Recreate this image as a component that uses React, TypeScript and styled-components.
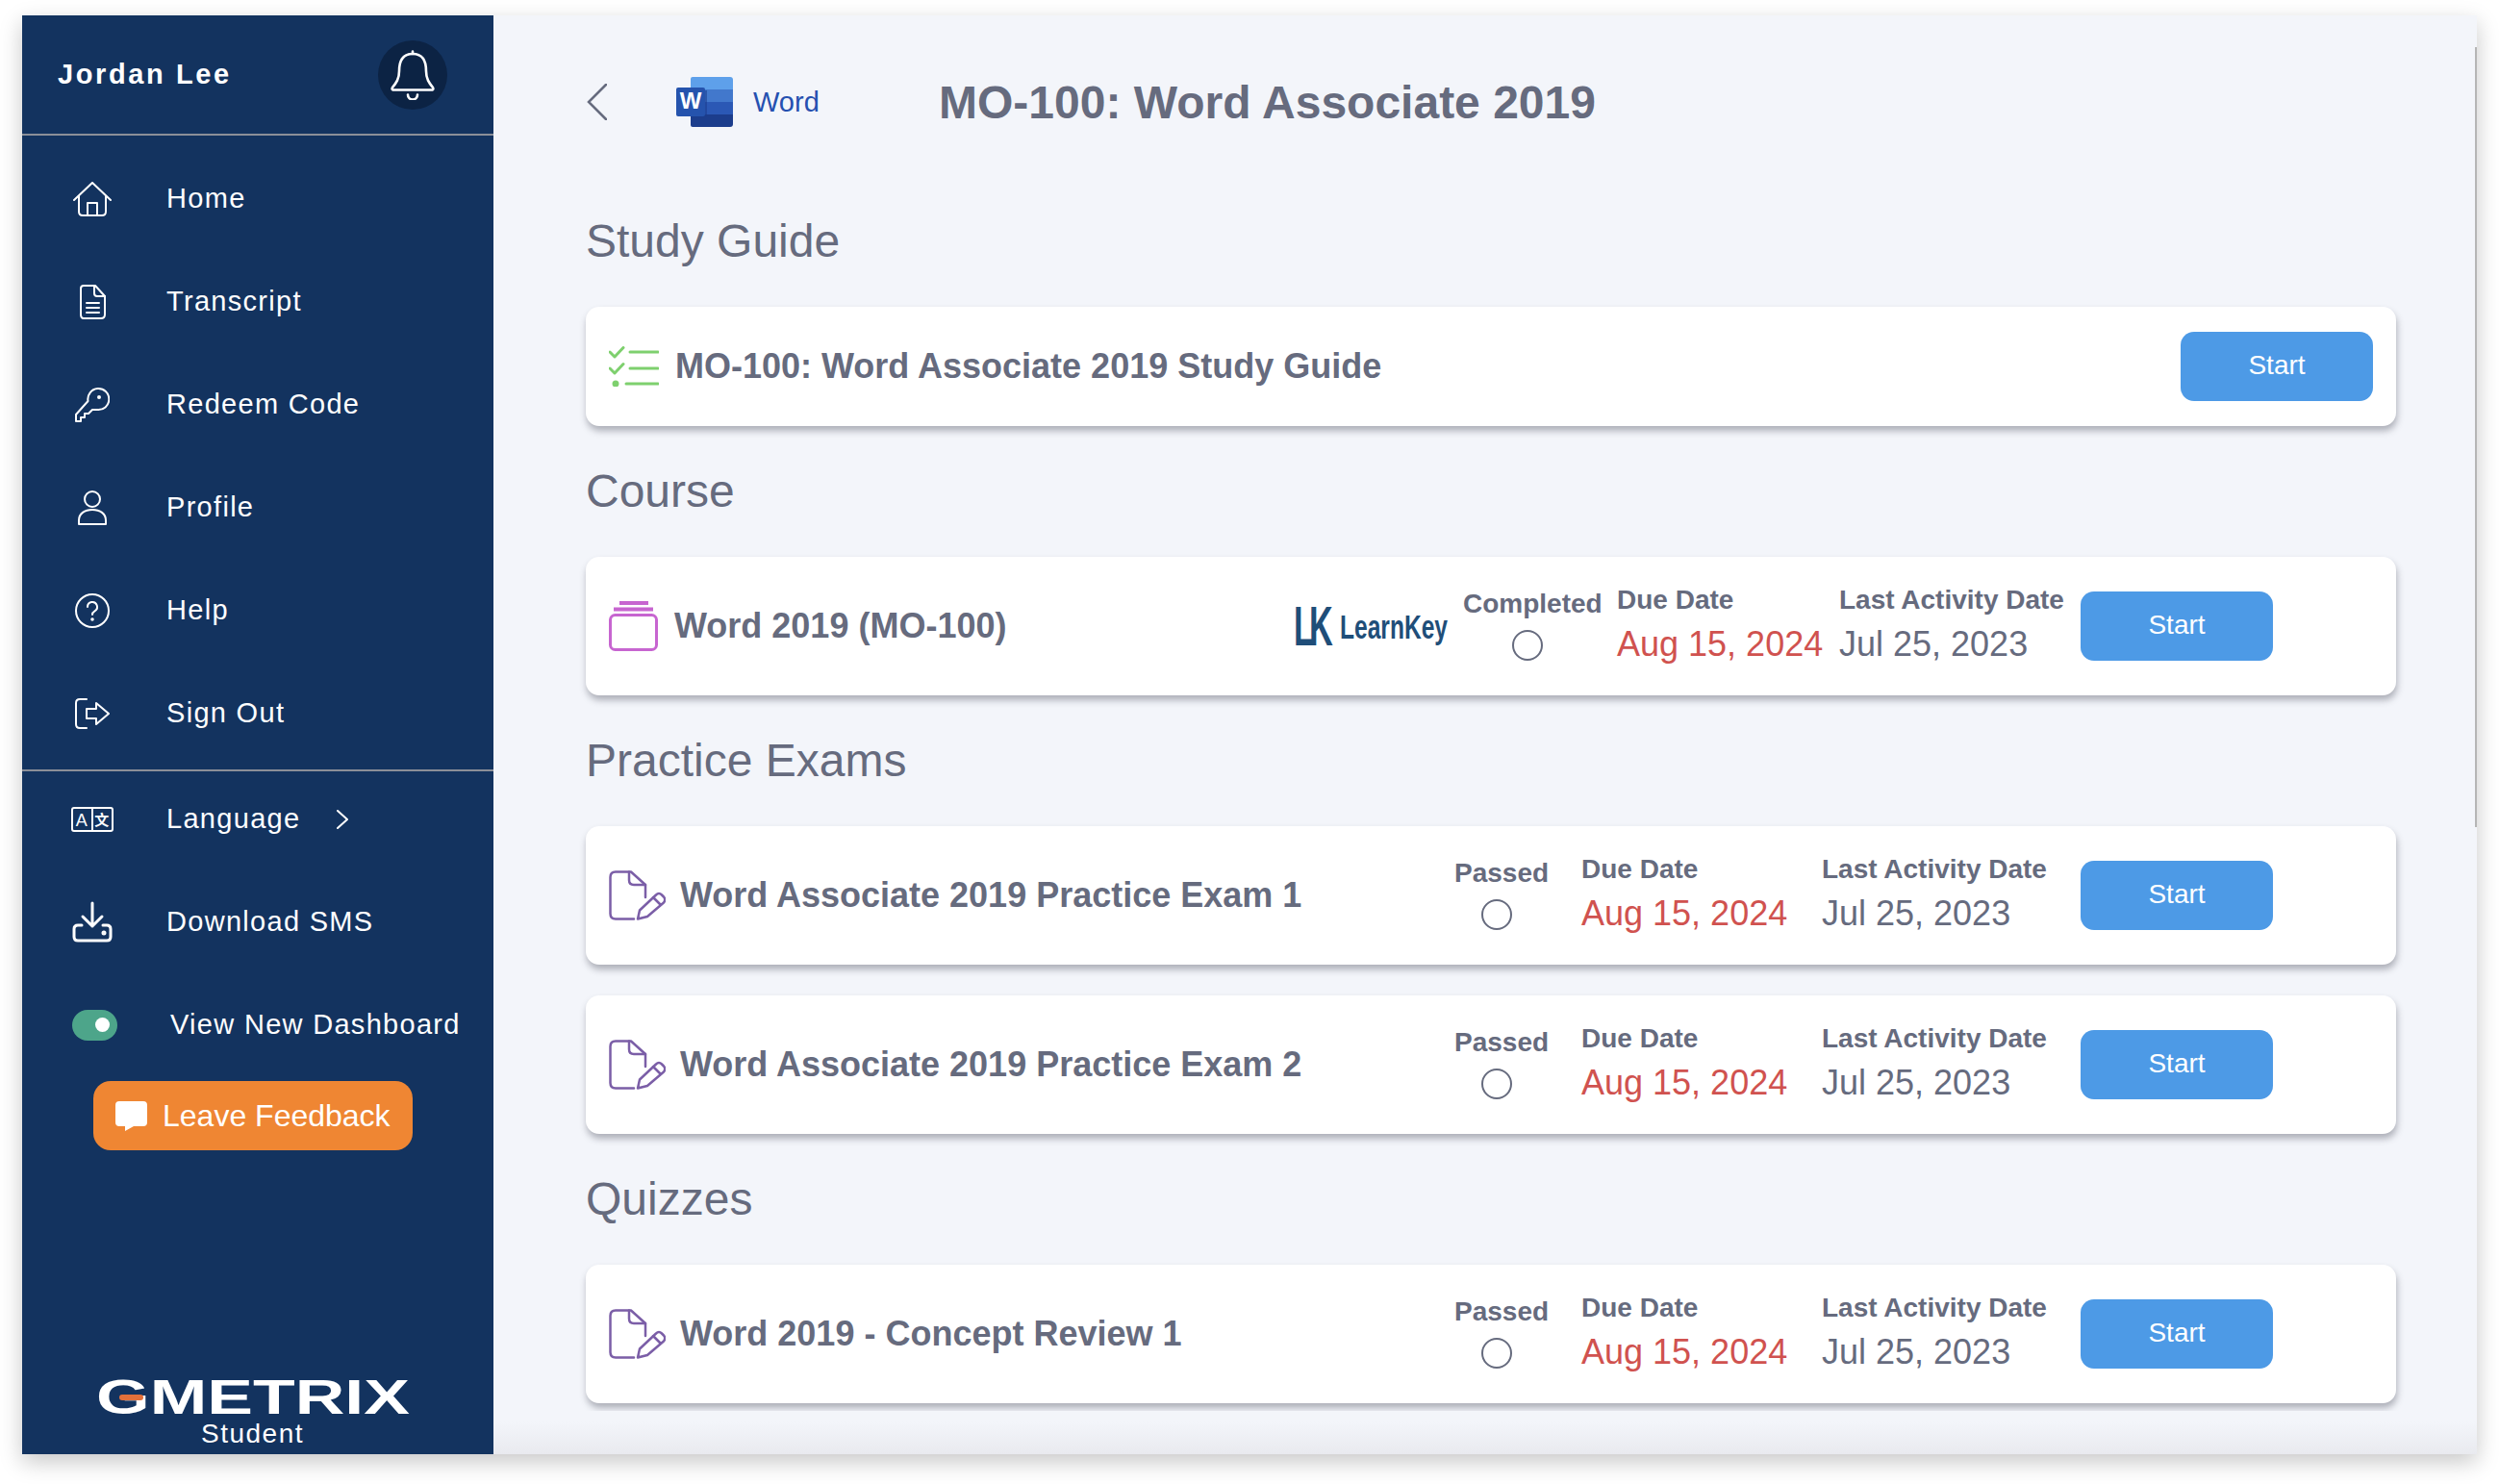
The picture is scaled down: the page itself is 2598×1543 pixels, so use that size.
import styled, { createGlobalStyle } from "styled-components";

const GlobalStyle = createGlobalStyle`
  html, body {
    margin: 0;
    background: #ffffff;
    font-family: "Liberation Sans", Arial, sans-serif;
  }
  * {
    box-sizing: border-box;
  }
`;

const Window = styled.div`
  display: flex;
  width: 2552px;
  height: 1496px;
  margin: 16px 23px 31px;
  background: #f3f5fa;
  box-shadow: 0 8px 22px rgba(0, 0, 0, 0.22);
`;

const Sidebar = styled.aside`
  width: 490px;
  flex-shrink: 0;
  display: flex;
  flex-direction: column;
  background: #13335f;
  color: #ffffff;
`;

const UserBar = styled.div`
  height: 125px;
  display: flex;
  align-items: center;
  justify-content: space-between;
  padding: 0 48px 0 37px;
  border-bottom: 2px solid #8b8f98;
`;

const UserName = styled.div`
  font-size: 29px;
  font-weight: 700;
  letter-spacing: 2.6px;
`;

const BellCircle = styled.div`
  width: 72px;
  height: 72px;
  border-radius: 50%;
  background: #0c2344;
  display: flex;
  align-items: center;
  justify-content: center;
`;

const PrimaryNav = styled.nav`
  padding: 12px 0 5px;
  border-bottom: 2px solid #8b8f98;
`;

const SecondaryNav = styled.nav`
  margin-top: -4px;
`;

const NavItem = styled.div`
  height: 107px;
  display: flex;
  align-items: center;
  padding-left: 50px;
  font-size: 29px;
  letter-spacing: 1.3px;
`;

const NavIcon = styled.span`
  width: 46px;
  margin-right: 54px;
  display: flex;
  justify-content: center;
  flex-shrink: 0;
`;

const Chevron = styled.svg`
  margin-left: 38px;
`;

const ToggleTrack = styled.span`
  width: 47px;
  height: 32px;
  margin: 0 55px 0 2px;
  border-radius: 16px;
  background: #4da58a;
  display: flex;
  align-items: center;
  justify-content: flex-end;
  padding-right: 8px;
  flex-shrink: 0;
`;

const ToggleKnob = styled.span`
  width: 15px;
  height: 15px;
  border-radius: 50%;
  background: #ffffff;
`;

const FeedbackButton = styled.button`
  width: 332px;
  height: 72px;
  margin: 5px 0 0 74px;
  border: none;
  border-radius: 18px;
  background: #ef8633;
  color: #ffffff;
  font: 400 32px "Liberation Sans", Arial, sans-serif;
  display: flex;
  align-items: center;
  gap: 16px;
  padding: 0 0 0 23px;
`;

const SideFooter = styled.div`
  margin-top: auto;
  display: flex;
  flex-direction: column;
  align-items: center;
  padding: 0 11px 4px 0;
`;

const LogoSvg = styled.svg`
  overflow: visible;
`;

const StudentLabel = styled.div`
  font-size: 28px;
  letter-spacing: 1.5px;
  line-height: 34px;
  margin-top: 3px;
`;

const Main = styled.main`
  position: relative;
  flex: 1;
  display: flex;
  flex-direction: column;
  min-width: 0;
`;

const ScrollEdge = styled.div`
  position: absolute;
  top: 33px;
  right: 0;
  width: 2px;
  height: 811px;
  background: #b5b5b5;
`;

const Content = styled.div`
  flex: 1;
  overflow: hidden;
  padding: 56px 84px 0 96px;
  color: #666b7e;
`;

const BottomFade = styled.div`
  height: 45px;
  flex-shrink: 0;
  background: linear-gradient(#f3f5fa 25%, #e9eaef);
`;

const PageHeader = styled.header`
  height: 68px;
  display: flex;
  align-items: center;
  margin-bottom: 80px;
`;

const BackIcon = styled.svg`
  margin-left: 1px;
  margin-right: 72px;
`;

const AppLabel = styled.span`
  margin-left: 21px;
  width: 193px;
  font-size: 29px;
  color: #2550b0;
`;

const PageTitle = styled.h1`
  margin: 0;
  font-size: 48px;
  font-weight: 700;
`;

const SectionTitle = styled.h2`
  margin: 37px 0 39px;
  height: 60px;
  line-height: 62px;
  font-size: 48px;
  font-weight: 400;
`;

const Card = styled.div<{ $compact?: boolean }>`
  height: ${(p) => (p.$compact ? "124px" : "144px")};
  display: flex;
  align-items: center;
  padding: 0 ${(p) => (p.$compact ? "24px" : "128px")} 0 24px;
  margin-bottom: 32px;
  border-radius: 14px;
  background: #ffffff;
  box-shadow: 1px 5px 7px rgba(60, 62, 80, 0.38);
  &:last-child {
    margin-bottom: 0;
  }
`;

const CardIcon = styled.span<{ $width: number }>`
  width: ${(p) => p.$width}px;
  flex-shrink: 0;
  display: flex;
`;

const CardTitle = styled.div`
  flex: 1;
  font-size: 36px;
  font-weight: 700;
  padding-bottom: 1px;
`;

const VendorLogo = styled.svg`
  margin-right: 16px;
  flex-shrink: 0;
  overflow: visible;
`;

const MetaColumn = styled.div<{ $width: number; $shift?: number }>`
  width: ${(p) => p.$width}px;
  flex-shrink: 0;
  display: flex;
  flex-direction: column;
  padding: 1px 0 6px ${(p) => p.$shift ?? 0}px;
`;

const MetaLabel = styled.div<{ $lower?: boolean }>`
  font-size: 28px;
  font-weight: 700;
  line-height: 32px;
  margin: ${(p) => (p.$lower ? "1px 0 8px" : "0 0 10px")};
`;

const DueValue = styled.div`
  font-size: 36px;
  line-height: 40px;
  color: #d0524f;
`;

const ActivityValue = styled.div`
  font-size: 36px;
  line-height: 40px;
`;

const StatusRadio = styled.span<{ $offset: number }>`
  width: 32px;
  height: 32px;
  margin: 3px 0 0 ${(p) => p.$offset}px;
  border: 2px solid #666b7e;
  border-radius: 50%;
`;

const StartButton = styled.button`
  width: 200px;
  height: 72px;
  flex-shrink: 0;
  border: none;
  border-radius: 14px;
  background: #4d9ae6;
  color: #ffffff;
  font: 400 28px "Liberation Sans", Arial, sans-serif;
  padding: 0 0 2px;
`;

const stroke = {
  fill: "none",
  stroke: "#ffffff",
  strokeWidth: 2,
  strokeLinecap: "round" as const,
  strokeLinejoin: "round" as const,
};

const BellIcon = () => (
  <svg width="46" height="52" viewBox="0 0 46 52" {...stroke} strokeWidth={2.6}>
    <path d="M23 4C12 4 9 12 9 22c0 8-3 12-7 17-1 2 0 2.500 2 2.500h38c2 0 3-.5 2-2.500-4-5-7-9-7-17C37 12 34 4 23 4Z" />
    <path d="M23 4V1.500M18 46.500a5 5 0 0 0 10 0" />
  </svg>
);

const HomeIcon = () => (
  <svg width="40" height="36" viewBox="0 0 40 36" {...stroke}>
    <path d="M1 19 20 1l19 18" />
    <path d="M6 15v16q0 4 4 4h20q4 0 4-4V15M15 35V22h10v13" />
  </svg>
);

const FileIcon = () => (
  <svg width="27" height="36" viewBox="0 0 27 36" {...stroke}>
    <path d="M4 1h12l10 11v19q0 4-4 4H4q-3 0-3-4V4q0-3 3-3Z" />
    <path d="M15 1v8q0 3 3 3h8M7 19h13M7 24h13M7 29h13" />
  </svg>
);

const KeyIcon = () => (
  <svg width="36" height="36" viewBox="0 0 36 36" {...stroke}>
    <path d="M13.500 14A11 11 0 1 1 23 23h-5l-4 4h-4v4H6v4H1v-7Z" />
    <circle cx="25" cy="10" r="1" fill="#ffffff" />
  </svg>
);

const UserIcon = () => (
  <svg width="32" height="36" viewBox="0 0 32 36" {...stroke}>
    <circle cx="16" cy="9" r="8" />
    <path d="M2 35v-4c0-7 6-11 14-11s14 4 14 11v4Z" />
  </svg>
);

const HelpIcon = () => (
  <svg width="36" height="36" viewBox="0 0 36 36" {...stroke}>
    <circle cx="18" cy="18" r="17" />
    <path d="M13 14a5 5 0 1 1 7.500 4.300Q18 19.800 18 22" />
    <circle cx="18" cy="27" r="0.8" fill="#ffffff" />
  </svg>
);

const SignOutIcon = () => (
  <svg width="36" height="32" viewBox="0 0 36 32" {...stroke}>
    <path d="M12 1H5Q1 1 1 5v22q0 4 4 4h7" />
    <path d="M12 11h10V5l13 11-13 11v-6H12Z" />
  </svg>
);

const LanguageIcon = () => (
  <svg width="44" height="26" viewBox="0 0 44 26" {...stroke}>
    <rect x="1" y="1" width="42" height="24" rx="2" />
    <path d="M22 1v24" />
    <text x="11.500" y="19.500" textAnchor="middle" fontSize="18" fontWeight="400" fill="#ffffff" stroke="none" fontFamily="Liberation Sans, sans-serif">
      A
    </text>
    <text x="32.500" y="19" textAnchor="middle" fontSize="15" fontWeight="700" fill="#ffffff" stroke="none" fontFamily="Noto Sans CJK SC, sans-serif">
      文
    </text>
  </svg>
);

const DownloadIcon = () => (
  <svg width="42" height="43" viewBox="0 0 42 43" {...stroke} strokeWidth={3}>
    <path d="M21 2v24M11 16l10 10 10-10" />
    <path d="M10 25H6q-4 0-4 4v8q0 4 4 4h30q4 0 4-4v-8q0-4-4-4h-4" />
    <circle cx="33" cy="33" r="1" fill="#ffffff" />
  </svg>
);

const CommentIcon = () => (
  <svg width="33" height="31" viewBox="0 0 33 31" fill="#ffffff">
    <path d="M4 0h25q4 0 4 4v18q0 4-4 4H19l-9 5v-5H4q-4 0-4-4V4q0-4 4-4Z" />
  </svg>
);

const GmetrixLogo = () => (
  <LogoSvg width="326" height="37" viewBox="0 0 326 37">
    <text x="0" y="36" fontSize="50" fontWeight="700" fill="#ffffff" textLength="326" lengthAdjust="spacingAndGlyphs" fontFamily="Liberation Sans, sans-serif">
      GMETRIX
    </text>
    <rect x="24" y="16" width="25" height="6" rx="3" fill="#e2703a" />
  </LogoSvg>
);

const WordIcon = () => (
  <svg width="59" height="52" viewBox="0 0 59 52">
    <path d="M17 0h39q3 0 3 3v10H15V2q0-2 2-2Z" fill="#5ea0ea" />
    <rect x="15" y="13" width="44" height="13" fill="#4278cc" />
    <rect x="15" y="26" width="44" height="13" fill="#2b58b5" />
    <path d="M15 39h44v10q0 3-3 3H17q-2 0-2-2Z" fill="#1c3d8c" />
    <rect x="15" y="14" width="17" height="28" fill="#1c3d8c" opacity="0.55" />
    <rect x="0" y="11" width="30" height="30" rx="2" fill="#2553ad" />
    <text x="15" y="33" textAnchor="middle" fontSize="24" fontWeight="700" fill="#ffffff" fontFamily="Liberation Sans, sans-serif">
      W
    </text>
  </svg>
);

const ChecklistIcon = () => (
  <svg width="52" height="42" viewBox="0 0 52 42" fill="none" stroke="#7ed06e" strokeWidth="3" strokeLinecap="round" strokeLinejoin="round">
    <path d="M1 6l5 5L15 1.500M22 6h29M1 23l5 5 9-9.500M22 23h29M18 39h33" />
    <circle cx="7" cy="39" r="2" fill="#7ed06e" />
  </svg>
);

const CourseIcon = () => (
  <svg width="51" height="52" viewBox="0 0 51 52" fill="none" stroke="#c765d0" strokeWidth="3">
    <path d="M11 2h30M5 8.500h41" strokeWidth="4" />
    <rect x="1.500" y="14.500" width="48" height="36" rx="5" />
  </svg>
);

const ExamIcon = () => (
  <svg width="59" height="52" viewBox="0 0 59 52" fill="none" stroke="#7b5ea7" strokeWidth="2.500" strokeLinejoin="round" strokeLinecap="round">
    <path d="M26 50.500H7q-5.500 0-5.500-5.500V7Q1.500 1.500 7 1.500h16L38 15v13" />
    <path d="M21 1.500V10q0 5 5 5h12" />
    <path d="M30 50.500l2-9 17-16q3-3 6 0l2 2q2.500 3 0 6L40 48ZM46 28l8 8" />
  </svg>
);

const LearnKeyLogo = () => (
  <VendorLogo width="160" height="42" viewBox="0 0 160 42" fill="#1f4e79" fontFamily="Liberation Sans, sans-serif">
    <text x="0" y="41" fontSize="57" fontWeight="700" letterSpacing="-8" textLength="36" lengthAdjust="spacingAndGlyphs">
      LK
    </text>
    <text x="48" y="34" fontSize="35" fontWeight="700" textLength="112" lengthAdjust="spacingAndGlyphs">
      LearnKey
    </text>
  </VendorLogo>
);

const primaryNav = [
  { label: "Home", icon: <HomeIcon /> },
  { label: "Transcript", icon: <FileIcon /> },
  { label: "Redeem Code", icon: <KeyIcon /> },
  { label: "Profile", icon: <UserIcon /> },
  { label: "Help", icon: <HelpIcon /> },
  { label: "Sign Out", icon: <SignOutIcon /> },
];

type ExamRowProps = { title: string };

function ExamRow({ title }: ExamRowProps) {
  return (
    <Card>
      <CardIcon $width={74}>
        <ExamIcon />
      </CardIcon>
      <CardTitle>{title}</CardTitle>
      <MetaColumn $width={132}>
        <MetaLabel $lower>Passed</MetaLabel>
        <StatusRadio $offset={28} />
      </MetaColumn>
      <MetaColumn $width={250}>
        <MetaLabel>Due Date</MetaLabel>
        <DueValue>Aug 15, 2024</DueValue>
      </MetaColumn>
      <MetaColumn $width={269}>
        <MetaLabel>Last Activity Date</MetaLabel>
        <ActivityValue>Jul 25, 2023</ActivityValue>
      </MetaColumn>
      <StartButton>Start</StartButton>
    </Card>
  );
}

export default function App() {
  return (
    <>
      <GlobalStyle />
      <Window>
        <Sidebar>
          <UserBar>
            <UserName>Jordan Lee</UserName>
            <BellCircle>
              <BellIcon />
            </BellCircle>
          </UserBar>
          <PrimaryNav>
            {primaryNav.map((item) => (
              <NavItem key={item.label}>
                <NavIcon>{item.icon}</NavIcon>
                {item.label}
              </NavItem>
            ))}
          </PrimaryNav>
          <SecondaryNav>
            <NavItem>
              <NavIcon>
                <LanguageIcon />
              </NavIcon>
              Language
              <Chevron width="12" height="20" viewBox="0 0 12 20" {...stroke}>
                <path d="M1 1l10 9-10 9" />
              </Chevron>
            </NavItem>
            <NavItem>
              <NavIcon>
                <DownloadIcon />
              </NavIcon>
              Download SMS
            </NavItem>
            <NavItem>
              <ToggleTrack>
                <ToggleKnob />
              </ToggleTrack>
              View New Dashboard
            </NavItem>
          </SecondaryNav>
          <FeedbackButton>
            <CommentIcon />
            Leave Feedback
          </FeedbackButton>
          <SideFooter>
            <GmetrixLogo />
            <StudentLabel>Student</StudentLabel>
          </SideFooter>
        </Sidebar>
        <Main>
          <ScrollEdge />
          <Content>
            <PageHeader>
              <BackIcon width="21" height="38" viewBox="0 0 21 38" fill="none" stroke="#666b7e" strokeWidth="2.500" strokeLinecap="round">
                <path d="M20 1 2 19l18 18" />
              </BackIcon>
              <WordIcon />
              <AppLabel>Word</AppLabel>
              <PageTitle>MO-100: Word Associate 2019</PageTitle>
            </PageHeader>

            <SectionTitle>Study Guide</SectionTitle>
            <Card $compact>
              <CardIcon $width={69}>
                <ChecklistIcon />
              </CardIcon>
              <CardTitle>MO-100: Word Associate 2019 Study Guide</CardTitle>
              <StartButton>Start</StartButton>
            </Card>

            <SectionTitle>Course</SectionTitle>
            <Card>
              <CardIcon $width={68}>
                <CourseIcon />
              </CardIcon>
              <CardTitle>Word 2019 (MO-100)</CardTitle>
              <LearnKeyLogo />
              <MetaColumn $width={159}>
                <MetaLabel $lower>Completed</MetaLabel>
                <StatusRadio $offset={51} />
              </MetaColumn>
              <MetaColumn $width={232} $shift={1}>
                <MetaLabel>Due Date</MetaLabel>
                <DueValue>Aug 15, 2024</DueValue>
              </MetaColumn>
              <MetaColumn $width={251}>
                <MetaLabel>Last Activity Date</MetaLabel>
                <ActivityValue>Jul 25, 2023</ActivityValue>
              </MetaColumn>
              <StartButton>Start</StartButton>
            </Card>

            <SectionTitle>Practice Exams</SectionTitle>
            <ExamRow title="Word Associate 2019 Practice Exam 1" />
            <ExamRow title="Word Associate 2019 Practice Exam 2" />

            <SectionTitle>Quizzes</SectionTitle>
            <ExamRow title="Word 2019 - Concept Review 1" />
          </Content>
          <BottomFade />
        </Main>
      </Window>
    </>
  );
}
